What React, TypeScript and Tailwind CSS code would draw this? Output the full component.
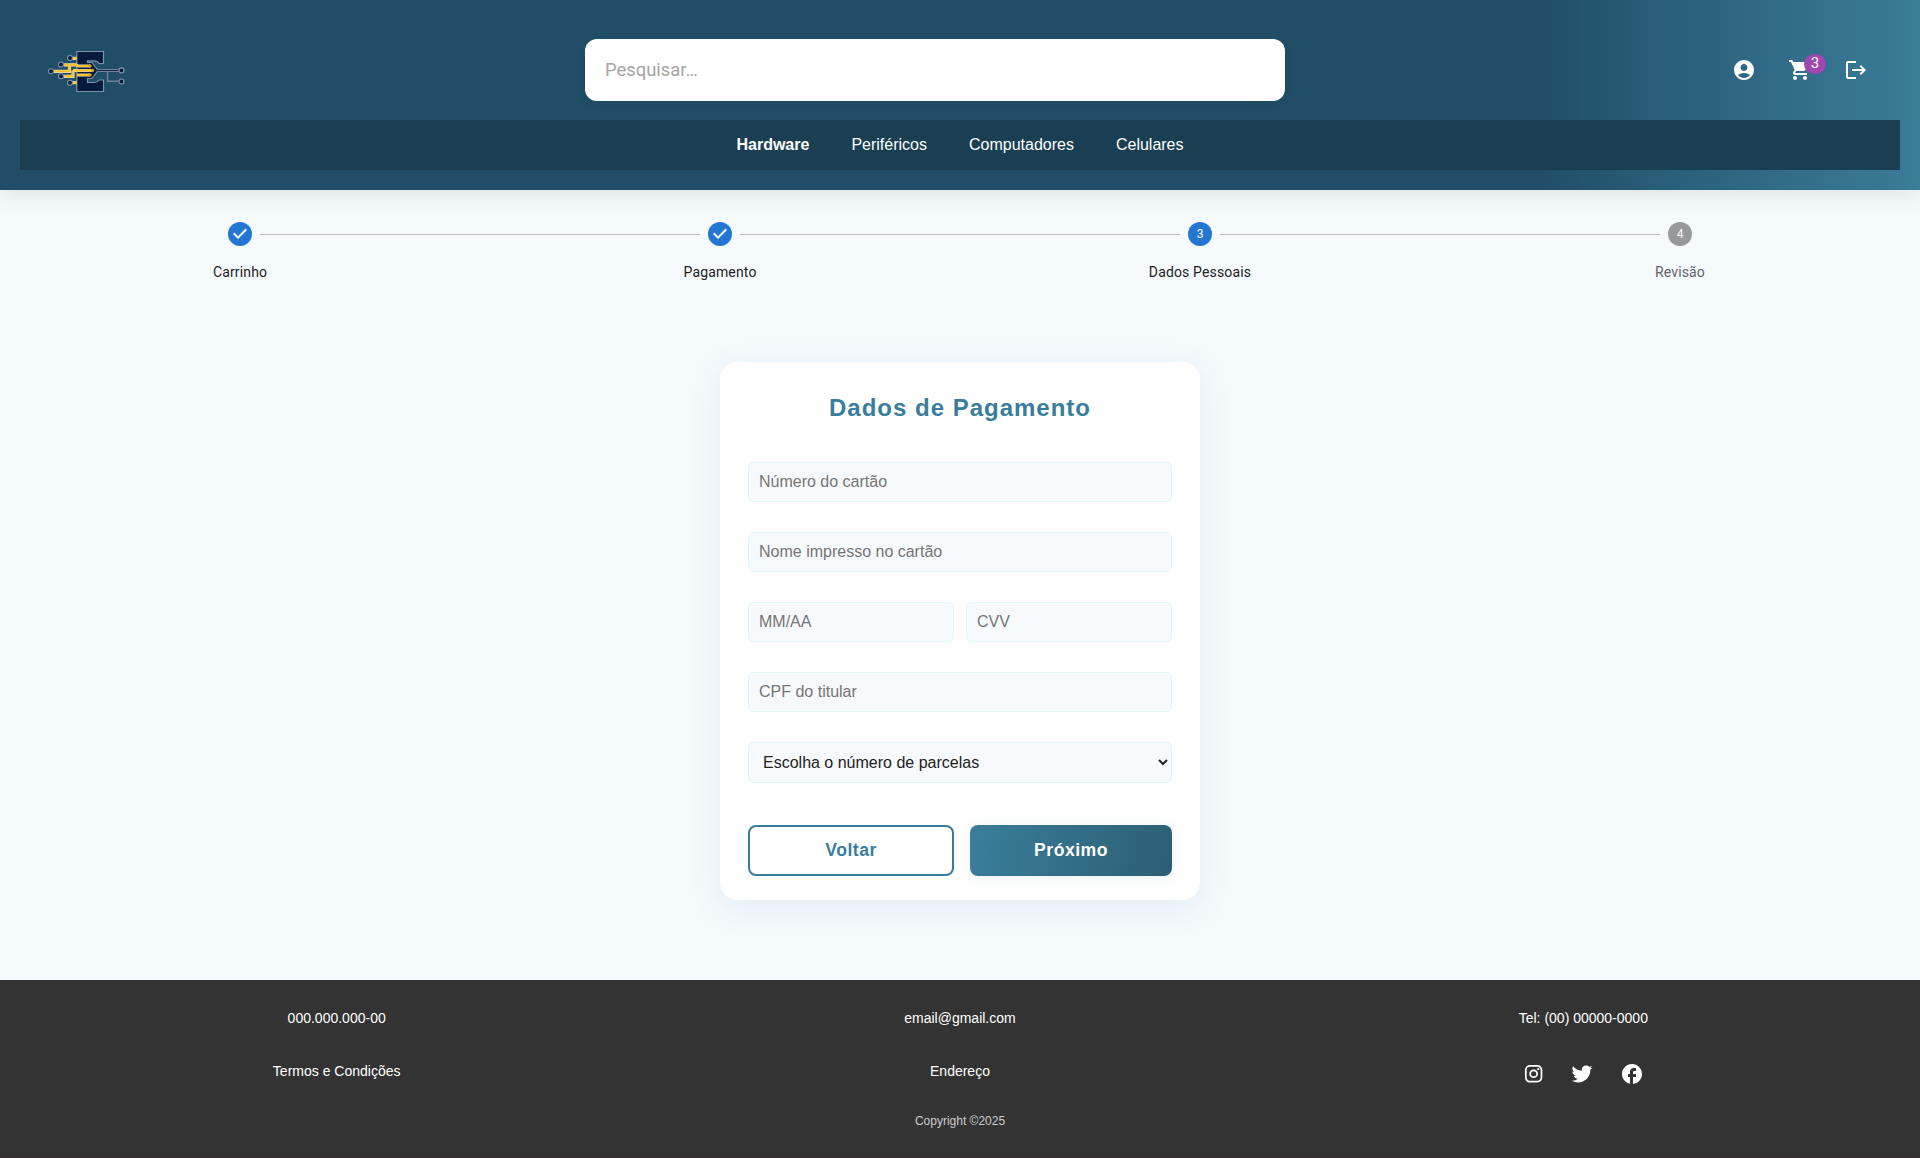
import React from "react";
import { MdAccountCircle, MdShoppingCart, MdLogout } from "react-icons/md";

const nodes = [[70, 58], [61, 64.5], [51, 71.3], [61, 76.3], [70, 82.7], [121.5, 70.4], [121.5, 81.5]];
const traces = "M64 64.800h12l2 1.200h12M54 71.300h15.500v-6M73 70.500h19M64 76.300h9v-5.800M77 75h13M72 58.300h4.500M72 82.700h4.500";

function Logo() {
  return (
    <svg className="h-20 w-30 shrink-0" viewBox="30 30 120 80" fill="none">
      <path d="M76.800 51.500H103.500V63.500H99Q97.500 60.800 94.500 60.800H87.500V62.500H92L98 70.500L92 78.500H87.500V82.500H94.500Q97.500 82.500 99 80H103.500V91.500H76.800Z" fill="#061a3c" stroke="#7f93a8" strokeWidth="1.200" />
      <path d={traces} stroke="#e8dcae" strokeWidth="3.200" />
      <path d={traces} stroke="#fbc02d" strokeWidth="2" />
      <g fill="#d9a514"><circle cx="90" cy="66" r="1.700" /><circle cx="92.500" cy="70.500" r="1.700" /><circle cx="90" cy="75" r="1.700" /></g>
      <path d="M98 70.500h21" stroke="#9aa9bb" strokeWidth="2.400" />
      <path d="M96 70.500h23" stroke="#12264a" strokeWidth="1.100" />
      <path d="M107.500 72v9.300h11" stroke="#6c8096" strokeWidth="1.500" />
      {nodes.map(([x, y]) => (
        <circle key={`${x}-${y}`} cx={x} cy={y} r="2.500" fill="#0a1d40" stroke="#8092a8" strokeWidth="1.100" />
      ))}
    </svg>
  );
}

function Twitter() {
  return (
    <svg className="size-6" viewBox="0 0 24 24" fill="currentColor">
      <path d="M22.460 6c-.77.35-1.600.58-2.460.69.88-.53 1.560-1.370 1.880-2.380-.83.5-1.750.85-2.720 1.050C18.370 4.500 17.260 4 16 4c-2.350 0-4.270 1.920-4.270 4.290 0 .34.04.67.11.98C8.280 9.090 5.110 7.380 3 4.790c-.37.63-.58 1.370-.58 2.150 0 1.490.75 2.810 1.910 3.560-.71 0-1.370-.2-1.950-.5v.03c0 2.080 1.480 3.820 3.440 4.210a4.220 4.220 0 0 1-1.930.07 4.280 4.280 0 0 0 4 2.980 8.521 8.521 0 0 1-5.330 1.840c-.34 0-.68-.02-1.020-.06C3.440 20.290 5.700 21 8.120 21 16 21 20.330 14.460 20.330 8.790c0-.19 0-.37-.01-.56.84-.6 1.560-1.360 2.140-2.230z" transform="translate(-1 -.5)" />
    </svg>
  );
}

function Instagram() {
  return (
    <svg className="size-6" viewBox="0 0 24 24" fill="currentColor">
      <path d="M7.800 2h8.400C19.400 2 22 4.600 22 7.800v8.400a5.800 5.800 0 0 1-5.800 5.800H7.800C4.600 22 2 19.400 2 16.200V7.800A5.800 5.800 0 0 1 7.800 2m-.2 2A3.600 3.600 0 0 0 4 7.600v8.800C4 18.390 5.610 20 7.600 20h8.800a3.600 3.600 0 0 0 3.600-3.600V7.600C20 5.610 18.390 4 16.400 4H7.600m9.650 1.500a1.250 1.250 0 1 1 0 2.500 1.250 1.250 0 0 1 0-2.500M12 7a5 5 0 1 1 0 10 5 5 0 0 1 0-10m0 2a3 3 0 1 0 0 6 3 3 0 0 0 0-6z" transform="translate(1.200 1.300) scale(.87)" />
    </svg>
  );
}

function Facebook() {
  return (
    <svg className="size-6" viewBox="0 0 24 24" fill="currentColor">
      <path d="M22 12c0-5.520-4.480-10-10-10S2 6.480 2 12c0 4.840 3.440 8.870 8 9.800V15H8v-3h2V9.500C10 7.570 11.570 6 13.500 6H16v3h-2c-.55 0-1 .45-1 1v2h3v3h-3v6.950c5.050-.5 9-4.760 9-9.950z" />
    </svg>
  );
}

const steps = ["Carrinho", "Pagamento", "Dados Pessoais", "Revisão"];

function Step({ label, index }: { label: string; index: number }) {
  return (
    <div className="relative flex flex-1 flex-col items-center">
      {index > 0 && <div className="absolute top-3 right-[calc(50%+20px)] left-[calc(-50%+20px)] h-px bg-[#bdbdbd]" />}
      <svg className={index < 3 ? "size-6 text-[#2476d3]" : "size-6 text-[#969a9c]"} viewBox="0 0 24 24" fill="currentColor">
        {index < 2 ? (
          <path d="M12 0a12 12 0 1 0 0 24 12 12 0 0 0 0-24zm-2 17l-5-5 1.400-1.400 3.600 3.600 7.600-7.600L19 8l-9 9z" />
        ) : (
          <>
            <circle cx="12" cy="12" r="12" />
            <text x="12" y="12" fill="#fff" fontSize="12" textAnchor="middle" dominantBaseline="central" className="font-['Roboto']">{index + 1}</text>
          </>
        )}
      </svg>
      <span className={index < 3 ? "mt-4 font-['Roboto'] text-sm leading-5 tracking-[0.15px] text-[#212223]" : "mt-4 font-['Roboto'] text-sm leading-5 tracking-[0.15px] text-[#626567]"}>{label}</span>
    </div>
  );
}

function Field({ placeholder }: { placeholder: string }) {
  return (
    <input
      placeholder={placeholder}
      className="h-10 w-full min-w-0 rounded-[5px] border border-[#e0f7fa] bg-[#f7fafc] px-2.5 text-base placeholder:text-[#757575]"
    />
  );
}

export default function App() {
  return (
    <div className="flex h-[1158px] flex-col overflow-hidden bg-[#f5fafd] font-['Liberation_Sans',sans-serif]">
      <header className="relative h-[190px] shrink-0 bg-[linear-gradient(90deg,#204e66_0%,#204e66_80%,#2b617d_88%,#3b7c99_100%)] p-5 shadow-[0_4px_20px_rgba(0,0,0,0.1)]">
        <div className="flex h-[100px] items-center pr-8 pl-2.5">
          <Logo />
          <div className="ml-[435px] h-[62px] w-[700px] rounded-xl bg-white px-5 shadow-[0_4px_12px_rgba(0,0,0,0.05)]">
            <input placeholder="Pesquisar…" className="h-full w-full pb-0.5 font-['Roboto'] text-[18.4px] outline-none placeholder:text-[#a5a5a5]" />
          </div>
          <div className="ml-auto flex gap-8 text-2xl text-white">
            <MdAccountCircle />
            <div className="relative">
              <MdShoppingCart />
              <span className="absolute -top-1 left-4 flex h-5 w-[22px] items-center justify-center rounded-[10px] bg-[#a048b0] font-['Roboto'] text-[15px]">3</span>
            </div>
            <MdLogout />
          </div>
        </div>
        <nav className="flex h-[50px] items-center justify-center gap-[42px] bg-[#1a3e52] text-base text-white">
          <b>Hardware</b>
          <span>Periféricos</span>
          <span>Computadores</span>
          <span>Celulares</span>
        </nav>
      </header>

      <div className="mt-8 flex">
        {steps.map((s, i) => <Step key={s} label={s} index={i} />)}
      </div>

      <main className="mx-auto mt-20 h-[538px] w-[480px] shrink-0 rounded-[18px] bg-white px-7 pt-7 shadow-[0_8px_32px_rgba(60,130,190,0.1)]">
        <h2 className="mt-1 text-center text-2xl leading-[28px] font-bold tracking-[1px] text-[#3a7d9b]">Dados de Pagamento</h2>
        <form className="mt-10 flex flex-col gap-[30px]">
          <Field placeholder="Número do cartão" />
          <Field placeholder="Nome impresso no cartão" />
          <div className="flex gap-3">
            <Field placeholder="MM/AA" />
            <Field placeholder="CVV" />
          </div>
          <Field placeholder="CPF do titular" />
          <select className="h-[41px] w-full rounded-[5px] border border-[#e0f7fa] bg-[#f7fafc] px-2.5 text-base text-[#222]">
            <option>Escolha o número de parcelas</option>
          </select>
        </form>
        <div className="mt-[42px] flex h-[51px] gap-4 text-[17.6px] font-bold tracking-[0.5px]">
          <button type="button" className="w-[206px] rounded-lg border-2 border-[#3a7d9b] text-[#3a7d9b]">Voltar</button>
          <button type="button" className="flex-1 rounded-lg bg-[linear-gradient(100deg,#3a7d9b_0%,#2c5f73_100%)] text-white shadow-[0_2px_12px_rgba(59,124,153,0.1)]">Próximo</button>
        </div>
      </main>

      <footer className="mt-20 h-[177px] shrink-0 bg-[#333] text-center text-sm text-white">
        <div className="grid grid-cols-3 px-[25px] pt-7">
          <span>000.000.000-00</span>
          <span>email@gmail.com</span>
          <span>Tel: (00) 00000-0000</span>
        </div>
        <div className="mt-[33px] grid h-6 grid-cols-3 px-[25px]">
          <span>Termos e Condições</span>
          <span>Endereço</span>
          <div className="flex justify-center gap-[25px] pt-px">
            <Instagram />
            <Twitter />
            <Facebook />
          </div>
        </div>
        <p className="mt-7 text-xs text-[#ccc]">Copyright ©2025</p>
      </footer>
      <div className="h-px bg-[#3a2a2e]" />
    </div>
  );
}
